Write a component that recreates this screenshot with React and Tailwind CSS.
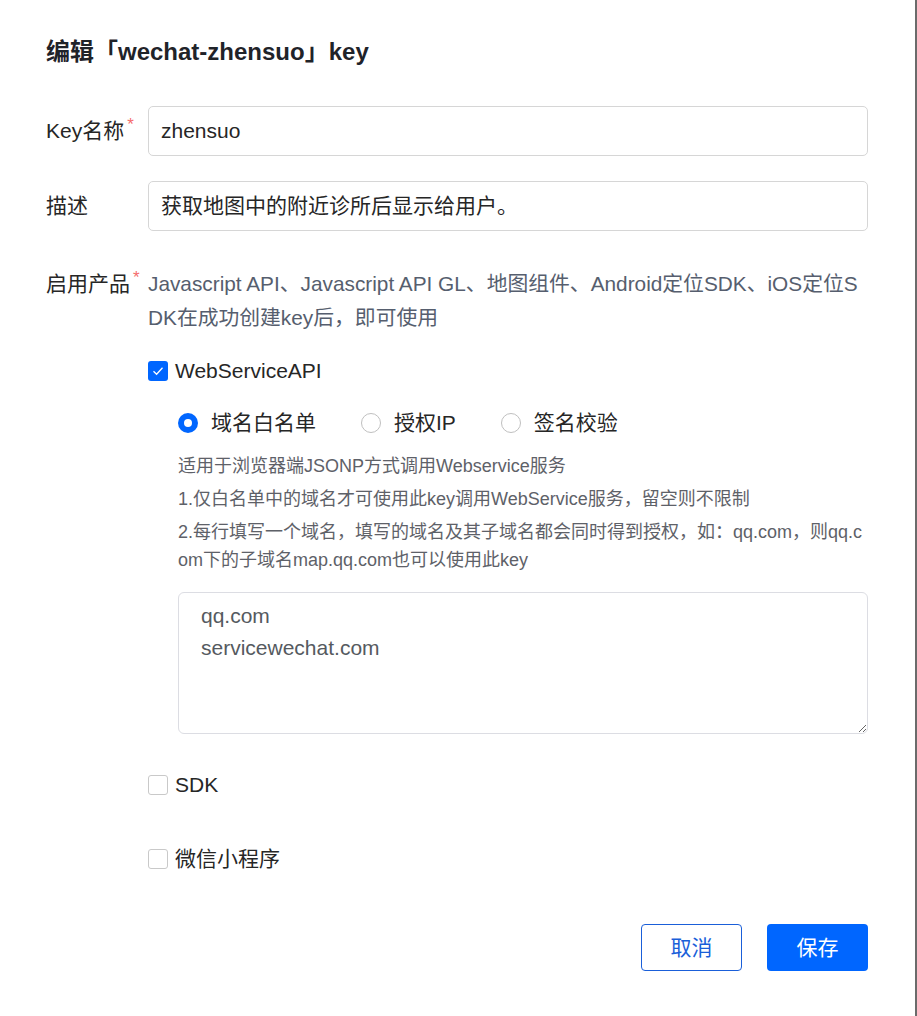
import React from 'react';

const FONT = '"Liberation Sans", "Noto Sans CJK SC", sans-serif';

function Required() {
  return <span className="relative -top-[8px] ml-[3px] text-[17px] leading-none text-[#f56c6c]">*</span>;
}

function Checkbox({ checked, label }) {
  return (
    <div className="flex items-center h-[32px]">
      {checked ? (
        <span className="w-[20px] h-[20px] rounded-[3px] bg-[#0066ff] flex items-center justify-center">
          <svg width="12" height="10" viewBox="0 0 12 10" fill="none">
            <path d="M1.5 5.2 L4.6 8.2 L10.5 1.8" stroke="white" strokeWidth="1.3" />
          </svg>
        </span>
      ) : (
        <span className="w-[20px] h-[20px] rounded-[3px] border border-[#c9c9c9] bg-white" />
      )}
      <span className="ml-[7px] text-[21px] text-[#262626]">{label}</span>
    </div>
  );
}

function Radio({ checked, label }) {
  return (
    <div className="flex items-center">
      {checked ? (
        <span className="w-[20px] h-[20px] rounded-full bg-[#0066ff] flex items-center justify-center">
          <span className="w-[8px] h-[8px] rounded-full bg-white" />
        </span>
      ) : (
        <span className="w-[20px] h-[20px] rounded-full border border-[#c0c0c0] bg-white" />
      )}
      <span className="ml-[13px] text-[21px] text-[#262626]">{label}</span>
    </div>
  );
}

export default function App() {
  return (
    <div
      className="w-[917px] min-h-[1016px] bg-white border-r-2 border-[#6b6b6b] pl-[46px] pr-[47px] pt-[36px]"
      style={{ fontFamily: FONT }}
    >
      <h1 className="text-[24px] leading-[32px] font-bold text-[#1f2329]">编辑「wechat-zhensuo」key</h1>

      <div className="mt-[38px] flex items-center">
        <div className="w-[102px] text-[21px] text-[#262626]">
          Key名称<Required />
        </div>
        <div className="flex-1 h-[50px] rounded-[5px] border border-[#d6d6d6] flex items-center px-[12px] text-[21px] text-[#262626]">
          zhensuo
        </div>
      </div>

      <div className="mt-[25px] flex items-center">
        <div className="w-[102px] text-[21px] text-[#262626]">描述</div>
        <div className="flex-1 h-[50px] rounded-[5px] border border-[#d6d6d6] flex items-center px-[12px] text-[21px] text-[#262626]">
          获取地图中的附近诊所后显示给用户。
        </div>
      </div>

      <div className="mt-[36px] flex">
        <div className="w-[102px] text-[21px] leading-[34px] text-[#262626]">
          启用产品<Required />
        </div>
        <div className="flex-1">
          <p className="text-[20.8px] leading-[34px] text-[#565e6e] whitespace-nowrap">
            Javascript API、Javascript API GL、地图组件、Android定位SDK、iOS定位S
            <br />
            DK在成功创建key后，即可使用
          </p>

          <div className="mt-[20px]">
            <Checkbox checked label="WebServiceAPI" />
          </div>

          <div className="ml-[30px]">
            <div className="mt-[20px] h-[32px] flex items-center gap-[45px]">
              <Radio checked label="域名白名单" />
              <Radio label="授权IP" />
              <Radio label="签名校验" />
            </div>

            <div className="mt-[13px] text-[18px] leading-[28px] text-[#5e6168] flex flex-col gap-[5px]">
              <p>适用于浏览器端JSONP方式调用Webservice服务</p>
              <p>1.仅白名单中的域名才可使用此key调用WebService服务，留空则不限制</p>
              <p className="whitespace-nowrap">
                2.每行填写一个域名，填写的域名及其子域名都会同时得到授权，如：qq.com，则qq.c
                <br />
                om下的子域名map.qq.com也可以使用此key
              </p>
            </div>

            <textarea
              className="mt-[18px] block w-full h-[142px] rounded-[6px] border border-[#dcdde3] pt-[7px] px-[22px] text-[21px] leading-[32px] text-[#555a60] outline-none"
              style={{ fontFamily: FONT }}
              defaultValue={'qq.com\nservicewechat.com'}
            />
          </div>

          <div className="mt-[35px]">
            <Checkbox label="SDK" />
          </div>
          <div className="mt-[42px]">
            <Checkbox label="微信小程序" />
          </div>
        </div>
      </div>

      <div className="mt-[49px] flex justify-end gap-[25px]">
        <button className="w-[101px] h-[47px] rounded-[4px] border border-[#1a5fd9] bg-white text-[21px] text-[#1a5fd9]">
          取消
        </button>
        <button className="w-[101px] h-[47px] rounded-[4px] bg-[#0066ff] text-[21px] text-white">
          保存
        </button>
      </div>
    </div>
  );
}
